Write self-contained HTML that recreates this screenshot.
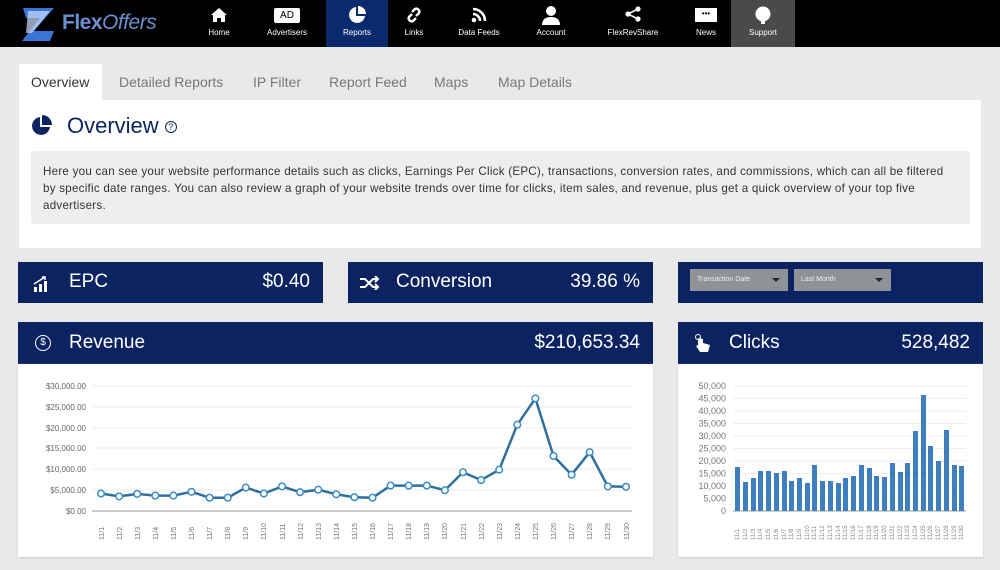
<!DOCTYPE html>
<html><head><meta charset="utf-8"><style>
*{margin:0;padding:0;box-sizing:border-box}
body{width:1000px;height:570px;background:#e9e9e9;font-family:"Liberation Sans",sans-serif;position:relative;overflow:hidden}
.abs{position:absolute}
.nav{left:0;top:0;width:1000px;height:47px;background:#000}
.ni{position:absolute;top:0;height:47px;color:#fff;font-size:8px;text-align:center}
.ni span{position:absolute;left:0;right:0;top:28px}
.tab{top:65px;height:35px;font-size:14px;color:#777;line-height:35px}
.navy{background:#0b2461;color:#fff}
.hd{font-size:19px}
.dd{position:absolute;top:269px;height:22px;background:#8f9397;color:#eee;font-size:7px;line-height:22px;padding-left:7px}
.dd:after{content:"";position:absolute;right:8px;top:9px;border:4px solid transparent;border-top:4px solid #222}
</style></head><body>
<div class="abs nav"></div>
<svg class="abs" style="left:20px;top:5px" width="40" height="38" viewBox="0 0 40 38"><polygon points="3,3 34,3 14,26 34,26 30,36 2,36 20,13 6,13" fill="#3a74d6"/><polygon points="8,6 30,6 12,28 6,28" fill="#cfe0ff" opacity=".7"/></svg>
<div class="abs" style="left:62px;top:11px;font-size:21px;color:#6d8fd0;font-weight:bold;letter-spacing:-.5px">Flex<i style="font-weight:normal">Offers</i></div>
<div class="ni" style="left:200px;width:38px"><svg style="margin-top:7px" width="18" height="16" viewBox="0 0 18 16"><path d="M9 1L1 8h2v7h4v-4h4v4h4V8h2z" fill="#fff"/></svg><span>Home</span></div>
<div class="ni" style="left:262px;width:50px"><div style="margin:8px auto 0;width:26px;height:15px;background:#fff;color:#000;font-size:10px;line-height:15px;border-radius:2px">AD</div><span>Advertisers</span></div>
<div class="ni" style="left:326px;width:62px;background:#0a2a6e"><svg style="margin-top:6px" width="18" height="18" viewBox="0 0 18 18"><path d="M8 1A8 8 0 1 0 17 10H8z" fill="#fff"/><path d="M10 0v8h8A8 8 0 0 0 10 0z" fill="#fff"/></svg><span>Reports</span></div>
<div class="ni" style="left:400px;width:28px"><svg style="margin-top:5px" width="16" height="20" viewBox="0 0 16 20"><path d="M6 9l-3 3a3 3 0 0 0 4 4l3-3M10 11l3-3a3 3 0 0 0-4-4L6 7" stroke="#fff" stroke-width="2.5" fill="none"/></svg><span>Links</span></div>
<div class="ni" style="left:452px;width:54px"><svg style="margin-top:7px" width="16" height="16" viewBox="0 0 16 16"><circle cx="3" cy="13" r="2.3" fill="#fff"/><path d="M2 7a7 7 0 0 1 7 7M2 2a12 12 0 0 1 12 12" stroke="#fff" stroke-width="2.6" fill="none"/></svg><span>Data Feeds</span></div>
<div class="ni" style="left:530px;width:42px"><svg style="margin-top:5px" width="18" height="20" viewBox="0 0 18 20"><circle cx="9" cy="6" r="5" fill="#fff"/><path d="M0 20c0-6 4-8 9-8s9 2 9 8z" fill="#fff"/></svg><span>Account</span></div>
<div class="ni" style="left:600px;width:66px"><svg style="margin-top:6px" width="16" height="16" viewBox="0 0 16 16"><circle cx="13" cy="3" r="2.6" fill="#fff"/><circle cx="3" cy="8" r="2.6" fill="#fff"/><circle cx="13" cy="13" r="2.6" fill="#fff"/><path d="M13 3L3 8l10 5" stroke="#fff" stroke-width="1.6" fill="none"/></svg><span>FlexRevShare</span></div>
<div class="ni" style="left:692px;width:28px"><div style="margin:8px auto 0;width:22px;height:14px;background:#fff;color:#000;font-size:8px;line-height:11px">•••</div><span>News</span></div>
<div class="ni" style="left:731px;width:64px;background:#4a4a4a"><svg style="margin-top:5px" width="18" height="20" viewBox="0 0 18 20"><circle cx="9" cy="9" r="7.5" fill="#fff"/><rect x="7" y="15" width="4" height="4" fill="#fff"/></svg><span>Support</span></div>
<div class="abs" style="left:19px;top:64px;width:83px;height:37px;background:#fff"></div>
<div class="abs tab" style="left:31px;color:#333">Overview</div>
<div class="abs tab" style="left:119px">Detailed Reports</div>
<div class="abs tab" style="left:253px">IP Filter</div>
<div class="abs tab" style="left:329px">Report Feed</div>
<div class="abs tab" style="left:434px">Maps</div>
<div class="abs tab" style="left:498px">Map Details</div>
<div class="abs" style="left:19px;top:100px;width:962px;height:148px;background:#fff"></div>
<svg class="abs" style="left:31px;top:115px" width="22" height="22" viewBox="0 0 22 22"><path d="M9 2A9 9 0 1 0 19 12H9z" fill="#0b2461"/><path d="M11 0v10h10A10 10 0 0 0 11 0z" fill="#0b2461"/></svg>
<div class="abs" style="left:67px;top:113px;font-size:22px;color:#0b2461">Overview <span style="display:inline-block;width:12px;height:12px;border:1.5px solid #0b2461;border-radius:50%;font-size:9px;line-height:10px;text-align:center;vertical-align:middle">?</span></div>
<div class="abs" style="left:31px;top:151px;width:939px;height:73px;background:#eeeeee;border-radius:3px;padding:12px 12px;font-size:11.6px;letter-spacing:0.25px;line-height:17px;color:#333">Here you can see your website performance details such as clicks, Earnings Per Click (EPC), transactions, conversion rates, and commissions, which can all be filtered by specific date ranges. You can also review a graph of your website trends over time for clicks, item sales, and revenue, plus get a quick overview of your top five advertisers.</div>
<div class="abs navy" style="left:18px;top:262px;width:305px;height:41px"></div>
<svg class="abs" style="left:33px;top:276px" width="18" height="16" viewBox="0 0 18 16"><rect x="1" y="11" width="3" height="5" fill="#fff"/><rect x="6" y="8" width="3" height="8" fill="#fff"/><rect x="11" y="5" width="3" height="11" fill="#fff"/><path d="M1 8L12 1M9 1h3v3" stroke="#fff" stroke-width="1.5" fill="none"/></svg>
<div class="abs hd" style="left:69px;top:271px;color:#fff">EPC</div>
<div class="abs hd" style="left:230px;width:80px;text-align:right;top:271px;color:#fff">$0.40</div>
<div class="abs navy" style="left:348px;top:262px;width:305px;height:41px"></div>
<svg class="abs" style="left:360px;top:276px" width="20" height="14" viewBox="0 0 20 14"><path d="M0 3h5l8 8h4M0 11h5l8-8h4M15 0l3 3-3 3M15 8l3 3-3 3" stroke="#fff" stroke-width="2" fill="none"/></svg>
<div class="abs hd" style="left:396px;top:271px;color:#fff">Conversion</div>
<div class="abs hd" style="left:540px;width:100px;text-align:right;top:271px;color:#fff">39.86 %</div>
<div class="abs navy" style="left:678px;top:262px;width:305px;height:41px"></div>
<div class="dd" style="left:690px;width:98px">Transaction Date</div>
<div class="dd" style="left:794px;width:97px">Last Month</div>
<div class="abs navy" style="left:18px;top:322px;width:635px;height:42px"></div>
<div class="abs" style="left:35px;top:335px;width:16px;height:16px;border:1.5px solid #fff;border-radius:50%;color:#fff;font-size:10px;text-align:center;line-height:13px">$</div>
<div class="abs hd" style="left:69px;top:332px;color:#fff">Revenue</div>
<div class="abs hd" style="left:480px;width:160px;text-align:right;top:332px;color:#fff">$210,653.34</div>
<div class="abs" style="left:18px;top:364px;width:635px;height:193px;background:#fff;box-shadow:0 1px 2px #ccc"></div>
<div class="abs navy" style="left:678px;top:322px;width:305px;height:42px"></div>
<svg class="abs" style="left:695px;top:334px" width="16" height="18" viewBox="0 0 16 18"><circle cx="3" cy="3" r="2.5" stroke="#fff" fill="none"/><path d="M3 4v7l-2 1 4 6h8l2-7-7-2V5z" fill="#fff"/></svg>
<div class="abs hd" style="left:729px;top:332px;color:#fff">Clicks</div>
<div class="abs hd" style="left:860px;width:110px;text-align:right;top:332px;color:#fff">528,482</div>
<div class="abs" style="left:678px;top:364px;width:305px;height:193px;background:#fff;box-shadow:0 1px 2px #ccc"></div>
<svg class="abs" style="left:0;top:0" width="1000" height="570" font-family="Liberation Sans" font-size="8" fill="#666">
<g stroke="#eee" stroke-width="1">
<line x1="92" y1="386" x2="632" y2="386"/><line x1="92" y1="407" x2="632" y2="407"/><line x1="92" y1="428" x2="632" y2="428"/><line x1="92" y1="448" x2="632" y2="448"/><line x1="92" y1="469" x2="632" y2="469"/><line x1="92" y1="490" x2="632" y2="490"/>
</g>
<line x1="92" y1="511" x2="632" y2="511" stroke="#999"/>
<g text-anchor="end"><text x="86" y="389">$30,000.00</text><text x="86" y="410">$25,000.00</text><text x="86" y="431">$20,000.00</text><text x="86" y="451">$15,000.00</text><text x="86" y="472">$10,000.00</text><text x="86" y="493">$5,000.00</text><text x="86" y="514">$0.00</text></g>
<polyline fill="none" stroke="#2e6f9e" stroke-width="2.5" points="101,493.5 119.1,496.4 137.2,493.9 155.3,495.6 173.4,495.6 191.5,491.8 209.6,497.7 227.7,497.7 245.8,487.6 263.9,493.5 282,486.4 300.1,492.2 318.2,489.7 336.3,494.3 354.4,497.2 372.5,497.7 390.6,485.6 408.7,485.6 426.8,485.6 444.9,490.2 463,472.2 481.1,480.1 499.2,469.7 517.3,424.7 535.4,398.4 553.5,456 571.6,474.7 589.7,452.2 607.8,486.4 626,486.8"/>
<g fill="#fff" stroke="#3b8cc4" stroke-width="1.5">
<circle cx="101" cy="493.5" r="3.3"/><circle cx="119.1" cy="496.4" r="3.3"/><circle cx="137.2" cy="493.9" r="3.3"/><circle cx="155.3" cy="495.6" r="3.3"/><circle cx="173.4" cy="495.6" r="3.3"/><circle cx="191.5" cy="491.8" r="3.3"/><circle cx="209.6" cy="497.7" r="3.3"/><circle cx="227.7" cy="497.7" r="3.3"/><circle cx="245.8" cy="487.6" r="3.3"/><circle cx="263.9" cy="493.5" r="3.3"/><circle cx="282" cy="486.4" r="3.3"/><circle cx="300.1" cy="492.2" r="3.3"/><circle cx="318.2" cy="489.7" r="3.3"/><circle cx="336.3" cy="494.3" r="3.3"/><circle cx="354.4" cy="497.2" r="3.3"/><circle cx="372.5" cy="497.7" r="3.3"/><circle cx="390.6" cy="485.6" r="3.3"/><circle cx="408.7" cy="485.6" r="3.3"/><circle cx="426.8" cy="485.6" r="3.3"/><circle cx="444.9" cy="490.2" r="3.3"/><circle cx="463" cy="472.2" r="3.3"/><circle cx="481.1" cy="480.1" r="3.3"/><circle cx="499.2" cy="469.7" r="3.3"/><circle cx="517.3" cy="424.7" r="3.3"/><circle cx="535.4" cy="398.4" r="3.3"/><circle cx="553.5" cy="456" r="3.3"/><circle cx="571.6" cy="474.7" r="3.3"/><circle cx="589.7" cy="452.2" r="3.3"/><circle cx="607.8" cy="486.4" r="3.3"/><circle cx="626" cy="486.8" r="3.3"/>
</g>
<g font-size="7" fill="#777">
<text transform="translate(104,540) rotate(-90)">11/1</text><text transform="translate(122,540) rotate(-90)">11/2</text><text transform="translate(140,540) rotate(-90)">11/3</text><text transform="translate(158,540) rotate(-90)">11/4</text><text transform="translate(176,540) rotate(-90)">11/5</text><text transform="translate(194,540) rotate(-90)">11/6</text><text transform="translate(212,540) rotate(-90)">11/7</text><text transform="translate(230,540) rotate(-90)">11/8</text><text transform="translate(248,540) rotate(-90)">11/9</text><text transform="translate(266,540) rotate(-90)">11/10</text><text transform="translate(285,540) rotate(-90)">11/11</text><text transform="translate(303,540) rotate(-90)">11/12</text><text transform="translate(321,540) rotate(-90)">11/13</text><text transform="translate(339,540) rotate(-90)">11/14</text><text transform="translate(357,540) rotate(-90)">11/15</text><text transform="translate(375,540) rotate(-90)">11/16</text><text transform="translate(393,540) rotate(-90)">11/17</text><text transform="translate(411,540) rotate(-90)">11/18</text><text transform="translate(429,540) rotate(-90)">11/19</text><text transform="translate(447,540) rotate(-90)">11/20</text><text transform="translate(466,540) rotate(-90)">11/21</text><text transform="translate(484,540) rotate(-90)">11/22</text><text transform="translate(502,540) rotate(-90)">11/23</text><text transform="translate(520,540) rotate(-90)">11/24</text><text transform="translate(538,540) rotate(-90)">11/25</text><text transform="translate(556,540) rotate(-90)">11/26</text><text transform="translate(574,540) rotate(-90)">11/27</text><text transform="translate(592,540) rotate(-90)">11/28</text><text transform="translate(610,540) rotate(-90)">11/29</text><text transform="translate(629,540) rotate(-90)">11/30</text>
</g>
<g stroke="#eee"><line x1="733" y1="386" x2="966" y2="386"/><line x1="733" y1="398.5" x2="966" y2="398.5"/><line x1="733" y1="411" x2="966" y2="411"/><line x1="733" y1="423.5" x2="966" y2="423.5"/><line x1="733" y1="436" x2="966" y2="436"/><line x1="733" y1="448.5" x2="966" y2="448.5"/><line x1="733" y1="461" x2="966" y2="461"/><line x1="733" y1="473.5" x2="966" y2="473.5"/><line x1="733" y1="486" x2="966" y2="486"/><line x1="733" y1="498.5" x2="966" y2="498.5"/></g>
<line x1="733" y1="511" x2="966" y2="511" stroke="#999"/>
<g text-anchor="end" font-size="9" fill="#777"><text x="726" y="389">50,000</text><text x="726" y="401.5">45,000</text><text x="726" y="414">40,000</text><text x="726" y="426.5">35,000</text><text x="726" y="439">30,000</text><text x="726" y="451.5">25,000</text><text x="726" y="464">20,000</text><text x="726" y="476.5">15,000</text><text x="726" y="489">10,000</text><text x="726" y="501.5">5,000</text><text x="726" y="514">0</text></g>
<g fill="#3f7fc0">
<rect x="735" y="467" width="5" height="44"/><rect x="743" y="482" width="5" height="29"/><rect x="751" y="478" width="5" height="33"/><rect x="758" y="471" width="5" height="40"/><rect x="766" y="471" width="5" height="40"/><rect x="774" y="473" width="5" height="38"/><rect x="782" y="471" width="5" height="40"/><rect x="789" y="481" width="5" height="30"/><rect x="797" y="478" width="5" height="33"/><rect x="805" y="483" width="5" height="28"/><rect x="812" y="465" width="5" height="46"/><rect x="820" y="481" width="5" height="30"/><rect x="828" y="481" width="5" height="30"/><rect x="836" y="483" width="5" height="28"/><rect x="843" y="478" width="5" height="33"/><rect x="851" y="476" width="5" height="35"/><rect x="859" y="465" width="5" height="46"/><rect x="867" y="468" width="5" height="43"/><rect x="874" y="476" width="5" height="35"/><rect x="882" y="477" width="5" height="34"/><rect x="890" y="463" width="5" height="48"/><rect x="898" y="472" width="5" height="39"/><rect x="905" y="463" width="5" height="48"/><rect x="913" y="431" width="5" height="80"/><rect x="921" y="395" width="5" height="116"/><rect x="928" y="446" width="5" height="65"/><rect x="936" y="461" width="5" height="50"/><rect x="944" y="430" width="5" height="81"/><rect x="952" y="465" width="5" height="46"/><rect x="959" y="466" width="5" height="45"/>
</g>
<g font-size="6" fill="#888">
<text transform="translate(739,540) rotate(-90)">11/1</text><text transform="translate(747,540) rotate(-90)">11/2</text><text transform="translate(755,540) rotate(-90)">11/3</text><text transform="translate(762,540) rotate(-90)">11/4</text><text transform="translate(770,540) rotate(-90)">11/5</text><text transform="translate(778,540) rotate(-90)">11/6</text><text transform="translate(786,540) rotate(-90)">11/7</text><text transform="translate(793,540) rotate(-90)">11/8</text><text transform="translate(801,540) rotate(-90)">11/9</text><text transform="translate(809,540) rotate(-90)">11/10</text><text transform="translate(816,540) rotate(-90)">11/11</text><text transform="translate(824,540) rotate(-90)">11/12</text><text transform="translate(832,540) rotate(-90)">11/13</text><text transform="translate(840,540) rotate(-90)">11/14</text><text transform="translate(847,540) rotate(-90)">11/15</text><text transform="translate(855,540) rotate(-90)">11/16</text><text transform="translate(863,540) rotate(-90)">11/17</text><text transform="translate(871,540) rotate(-90)">11/18</text><text transform="translate(878,540) rotate(-90)">11/19</text><text transform="translate(886,540) rotate(-90)">11/20</text><text transform="translate(894,540) rotate(-90)">11/21</text><text transform="translate(902,540) rotate(-90)">11/22</text><text transform="translate(909,540) rotate(-90)">11/23</text><text transform="translate(917,540) rotate(-90)">11/24</text><text transform="translate(925,540) rotate(-90)">11/25</text><text transform="translate(932,540) rotate(-90)">11/26</text><text transform="translate(940,540) rotate(-90)">11/27</text><text transform="translate(948,540) rotate(-90)">11/28</text><text transform="translate(956,540) rotate(-90)">11/29</text><text transform="translate(963,540) rotate(-90)">11/30</text>
</g>
</svg>
</body></html>
